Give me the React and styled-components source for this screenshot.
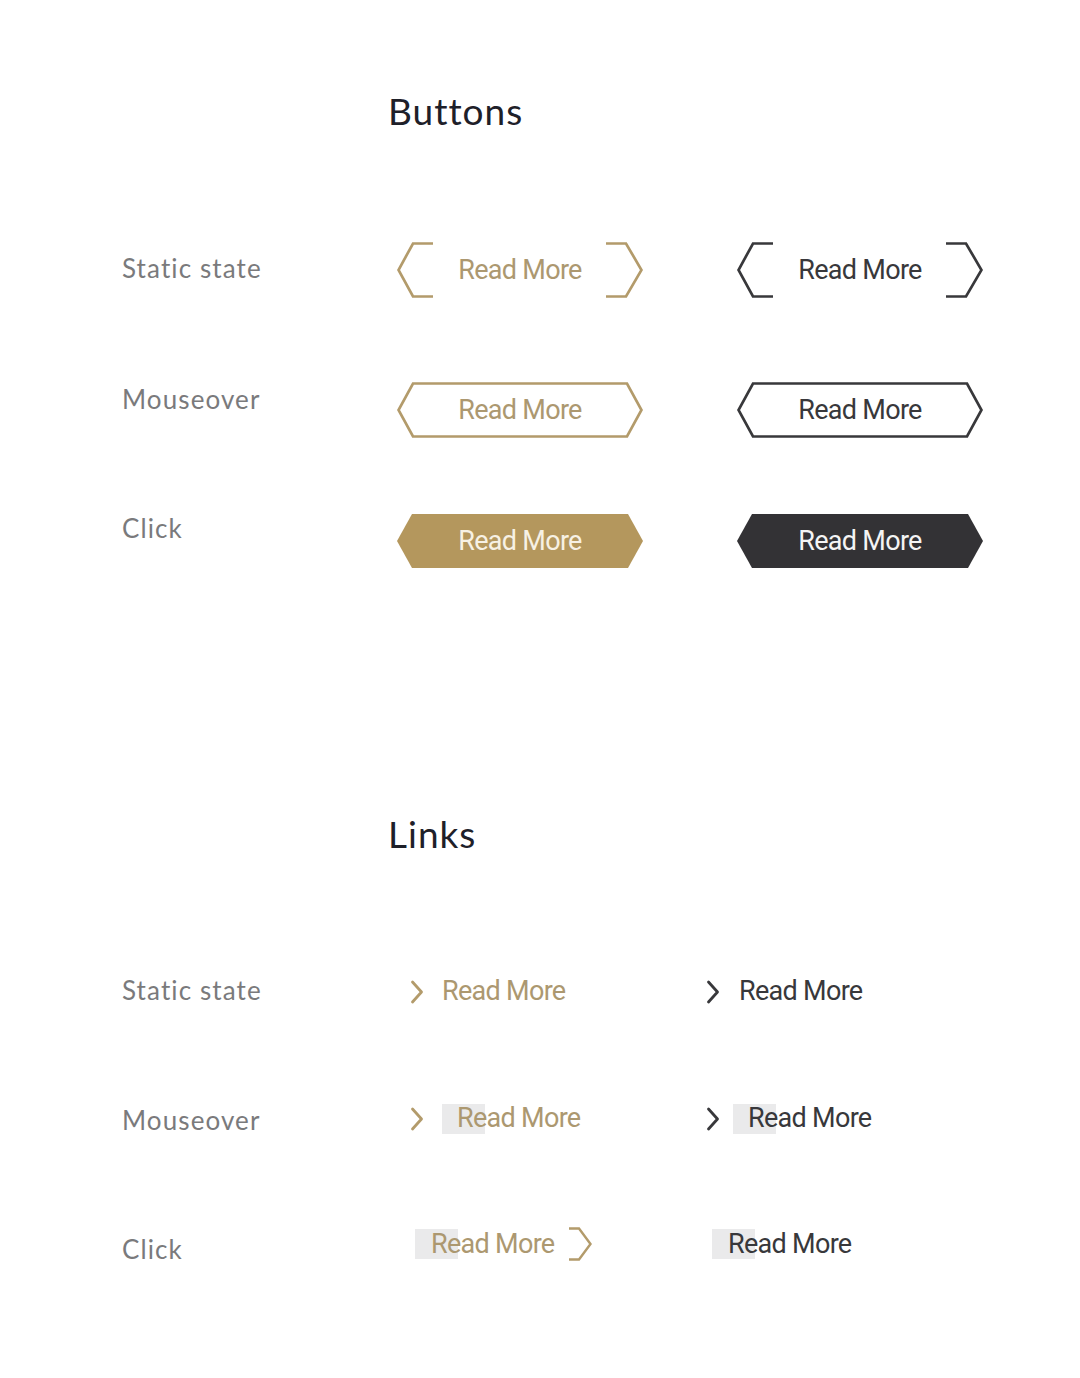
import React from "react";
import styled, { createGlobalStyle } from "styled-components";

const GOLD = "#b39b6b";
const GOLD_TEXT = "#ac9870";
const GOLD_FILL = "#b4975d";
const DARK = "#38383b";
const DARK_FILL = "#333235";

const GlobalStyle = createGlobalStyle`
  body {
    margin: 0;
    background: #ffffff;
  }
`;

const Page = styled.main`
  width: 1080px;
  min-height: 1378px;
  box-sizing: border-box;
  padding: 89px 0 0 122px;
`;

const Heading = styled.h2`
  margin: ${(p) => p.$top}px 0 0 266px;
  font-family: Lato, "Noto Sans", sans-serif;
  font-weight: 400;
  font-size: 37px;
  line-height: 44px;
  letter-spacing: 1px;
  color: #1e2029;
`;

const Row = styled.div`
  display: grid;
  grid-template-columns: ${(p) => p.$cols};
  align-items: center;
  height: ${(p) => p.$h}px;
  margin-top: ${(p) => p.$top}px;
`;

const StateLabel = styled.div`
  font-family: Lato, "Noto Sans", sans-serif;
  font-size: 26px;
  line-height: 1;
  letter-spacing: 1.1px;
  color: #7a7a7c;
  transform: translateY(${(p) => p.$shift || 0}px);
`;

const Btn = styled.button`
  position: relative;
  width: 246px;
  height: 56px;
  padding: 0;
  border: 0;
  background: none;
  display: flex;
  align-items: center;
  justify-content: center;
  font-family: Roboto, "Liberation Sans", sans-serif;
  font-size: 27px;
  line-height: 1;
  letter-spacing: -0.7px;
  color: ${(p) => p.$color};
  cursor: pointer;

  svg {
    position: absolute;
    inset: 0;
  }
  span {
    position: relative;
  }
`;

const LinkItem = styled.a`
  display: inline-flex;
  align-items: center;
  margin-left: ${(p) => p.$indent || 0}px;
  font-family: Roboto, "Liberation Sans", sans-serif;
  font-size: 27px;
  line-height: 1;
  letter-spacing: -0.7px;
  color: ${(p) => p.$color};
  text-decoration: none;
  cursor: pointer;
`;

const LinkText = styled.span`
  position: relative;
  z-index: 0;
  margin-left: ${(p) => p.$gap || 0}px;
  margin-right: ${(p) => p.$after || 0}px;
  padding-left: ${(p) => (p.$hl ? p.$pad : 0)}px;

  &::before {
    content: "";
    display: ${(p) => (p.$hl ? "block" : "none")};
    position: absolute;
    left: 0;
    top: 50%;
    transform: translateY(-50%);
    width: 43px;
    height: 30px;
    background: #eaeaeb;
    z-index: -1;
  }
`;

const HEX = "16,1.5 230,1.5 244.5,28 230,54.5 16,54.5 1.5,28";

function Shape({ variant, color }) {
  if (variant === "static") {
    return (
      <svg width="246" height="56" viewBox="0 0 246 56" fill="none">
        <path
          d="M36 1.5 H16 L1.5 28 L16 54.5 H36 M209 1.5 H229 L244.5 28 L229 54.5 H209"
          stroke={color}
          strokeWidth="2.7"
        />
      </svg>
    );
  }
  if (variant === "hover") {
    return (
      <svg width="246" height="56" viewBox="0 0 246 56" fill="none">
        <polygon points={HEX} stroke={color} strokeWidth="2.7" />
      </svg>
    );
  }
  return (
    <svg width="246" height="56" viewBox="0 0 246 56">
      <polygon points="15,1 231,1 246,28 231,55 15,55 0,28" fill={color} />
    </svg>
  );
}

function HexButton({ variant, tone }) {
  const gold = tone === "gold";
  const line = gold ? GOLD : DARK;
  const fill = gold ? GOLD_FILL : DARK_FILL;
  const text = variant === "click" ? (gold ? "#f7f1e4" : "#f4f4f4") : gold ? GOLD_TEXT : DARK;
  return (
    <Btn $color={text}>
      <Shape variant={variant} color={variant === "click" ? fill : line} />
      <span>Read More</span>
    </Btn>
  );
}

const Chevron = ({ color }) => (
  <svg width="14" height="24" viewBox="0 0 14 24" fill="none">
    <path d="M2.5 2 L11.5 12 L2.5 22" stroke={color} strokeWidth="2.8" strokeLinecap="round" strokeLinejoin="round" />
  </svg>
);

const Bracket = ({ color }) => (
  <svg width="24" height="34" viewBox="0 0 24 34" fill="none">
    <path d="M1 1.5 H11 L22.5 17 L11 32.5 H1" stroke={color} strokeWidth="2.4" />
  </svg>
);

const BTN_COLS = "275px 340px 246px";
const LINK_COLS = "288px 296px auto";

export default function App() {
  return (
    <Page>
      <GlobalStyle />
      <Heading $top={0}>Buttons</Heading>

      <Row $cols={BTN_COLS} $h={56} $top={109}>
        <StateLabel $shift={-2}>Static state</StateLabel>
        <HexButton variant="static" tone="gold" />
        <HexButton variant="static" tone="dark" />
      </Row>
      <Row $cols={BTN_COLS} $h={56} $top={84}>
        <StateLabel $shift={-11}>Mouseover</StateLabel>
        <HexButton variant="hover" tone="gold" />
        <HexButton variant="hover" tone="dark" />
      </Row>
      <Row $cols={BTN_COLS} $h={56} $top={75}>
        <StateLabel $shift={-13}>Click</StateLabel>
        <HexButton variant="click" tone="gold" />
        <HexButton variant="click" tone="dark" />
      </Row>

      <Heading $top={243}>Links</Heading>

      <Row $cols={LINK_COLS} $h={32} $top={121}>
        <StateLabel $shift={-3}>Static state</StateLabel>
        <div>
          <LinkItem $color={GOLD_TEXT}>
            <Chevron color={GOLD} />
            <LinkText $gap={18}>Read More</LinkText>
          </LinkItem>
        </div>
        <div>
          <LinkItem $color={DARK}>
            <Chevron color={DARK} />
            <LinkText $gap={19}>Read More</LinkText>
          </LinkItem>
        </div>
      </Row>
      <Row $cols={LINK_COLS} $h={32} $top={95}>
        <StateLabel>Mouseover</StateLabel>
        <div>
          <LinkItem $color={GOLD_TEXT}>
            <Chevron color={GOLD} />
            <LinkText $gap={18} $hl $pad={15}>Read More</LinkText>
          </LinkItem>
        </div>
        <div>
          <LinkItem $color={DARK}>
            <Chevron color={DARK} />
            <LinkText $gap={13} $hl $pad={15}>Read More</LinkText>
          </LinkItem>
        </div>
      </Row>
      <Row $cols={LINK_COLS} $h={32} $top={91}>
        <StateLabel $shift={5}>Click</StateLabel>
        <div>
          <LinkItem $color={GOLD_TEXT} $indent={5}>
            <LinkText $hl $pad={16} $after={14}>Read More</LinkText>
            <Bracket color={GOLD} />
          </LinkItem>
        </div>
        <div>
          <LinkItem $color={DARK} $indent={6}>
            <LinkText $hl $pad={16}>Read More</LinkText>
          </LinkItem>
        </div>
      </Row>
    </Page>
  );
}
